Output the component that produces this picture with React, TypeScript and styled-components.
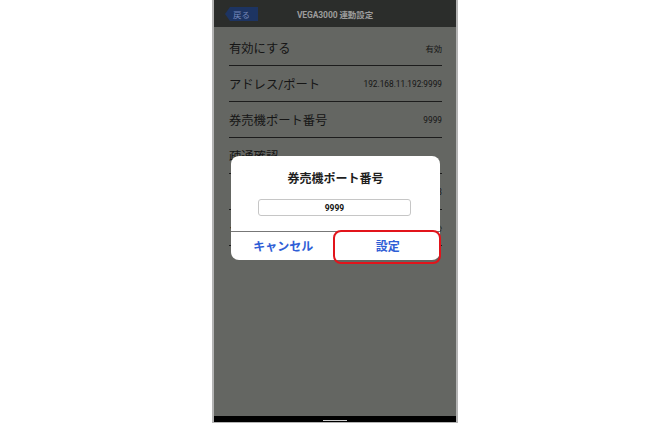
import { FC } from 'react';
import styled, { createGlobalStyle } from 'styled-components';

const GlobalStyle = createGlobalStyle`
  html, body {
    margin: 0;
    padding: 0;
    background: #ffffff;
  }
  body {
    font-family: Roboto, "Noto Sans CJK JP", sans-serif;
  }
`;

const Page = styled.div`
  display: flex;
  justify-content: center;
  width: 670px;
  height: 423px;
  background: #ffffff;
  overflow: hidden;
`;

const Phone = styled.div`
  position: relative;
  display: flex;
  flex-direction: column;
  width: 242px;
  height: 422px;
  border-left: 2px solid #b4b4b4;
  border-right: 2px solid #b4b4b4;
  border-bottom: 1px solid #b4b4b4;
  background: #646662;
`;

const Header = styled.header`
  position: relative;
  display: flex;
  align-items: center;
  justify-content: center;
  height: 27px;
  flex-shrink: 0;
  background: #2b2d2b;
`;

const BackButton = styled.div`
  position: absolute;
  left: 11px;
  top: 7px;
  display: flex;
  align-items: center;
  height: 14px;
  padding: 0 8px 0 8px;
  background: #1d3462;
  clip-path: polygon(5px 0, 100% 0, 100% 100%, 5px 100%, 0 50%);
  color: #7487b8;
  font-size: 8.5px;
`;

const Title = styled.div`
  color: #9c9c9c;
  font-size: 8.5px;
  font-weight: 700;
  letter-spacing: -0.1px;
`;

const List = styled.div`
  display: flex;
  flex-direction: column;
  padding: 3px 14px 0 15px;
  flex: 1;
`;

const Row = styled.div`
  display: flex;
  align-items: center;
  justify-content: space-between;
  height: 35px;
  border-bottom: 1px solid #1c1c1c;
`;

const Label = styled.span`
  color: #151515;
  font-size: 12.3px;
`;

const Value = styled.span`
  color: #151515;
  font-size: 8.3px;
`;

const NavBar = styled.div`
  display: flex;
  justify-content: center;
  align-items: flex-end;
  height: 5px;
  padding-bottom: 1px;
  background: #000000;
  flex-shrink: 0;
`;

const HomeLine = styled.div`
  width: 24px;
  height: 1.5px;
  background: #d0d0d0;
`;

const Dialog = styled.div`
  position: absolute;
  left: 17px;
  top: 156px;
  width: 209px;
  display: flex;
  flex-direction: column;
  align-items: center;
  background: #ffffff;
  border-radius: 8px;
  overflow: hidden;
`;

const DialogTitle = styled.div`
  margin-top: 13px;
  color: #1e1e1e;
  font-size: 12px;
  font-weight: 700;
`;

const Input = styled.div`
  display: flex;
  align-items: center;
  justify-content: center;
  width: 151px;
  height: 15px;
  margin: 13px 2px 0 0;
  border: 1px solid #c6c6c6;
  border-radius: 3px;
  color: #111;
  font-size: 8.5px;
  font-weight: 700;
`;

const ButtonRow = styled.div`
  display: grid;
  grid-template-columns: 1fr 1fr;
  width: 100%;
  height: 28px;
  margin-top: 15px;
  border-top: 1px solid #777;
`;

const DialogButton = styled.div`
  display: flex;
  align-items: center;
  justify-content: center;
  padding-bottom: 1px;
  color: #2f5ed6;
  font-size: 12px;
  font-weight: 700;
`;

const Highlight = styled.div`
  position: absolute;
  left: 119px;
  top: 230px;
  width: 104px;
  height: 30px;
  border: 2px solid #e2141b;
  border-radius: 8px;
`;

const rows = [
  { label: '有効にする', value: '有効' },
  { label: 'アドレス/ポート', value: '192.168.11.192:9999' },
  { label: '券売機ポート番号', value: '9999' },
  { label: '疎通確認', value: '' },
  { label: 'リトライ回数', value: '3' },
  { label: 'タイムアウト時間', value: '30秒' },
];

const App: FC = () => {
  return (
    <Page>
      <GlobalStyle />
      <Phone>
        <Header>
          <BackButton>戻る</BackButton>
          <Title>VEGA3000 連動設定</Title>
        </Header>
        <List>
          {rows.map((r) => (
            <Row key={r.label}>
              <Label>{r.label}</Label>
              <Value>{r.value}</Value>
            </Row>
          ))}
        </List>
        <NavBar>
          <HomeLine />
        </NavBar>
        <Dialog>
          <DialogTitle>券売機ポート番号</DialogTitle>
          <Input>9999</Input>
          <ButtonRow>
            <DialogButton>キャンセル</DialogButton>
            <DialogButton>設定</DialogButton>
          </ButtonRow>
        </Dialog>
        <Highlight />
      </Phone>
    </Page>
  );
};

export default App;
